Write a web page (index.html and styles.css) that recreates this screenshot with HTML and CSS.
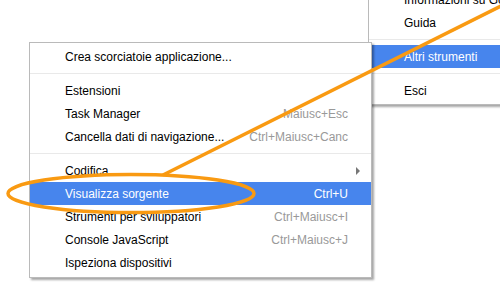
FILE: index.html
```html
<!DOCTYPE html>
<html lang="it">
<head>
    <meta charset="UTF-8">
    <meta name="viewport" content="width=device-width, initial-scale=1.0">
    <title>Altri strumenti</title>
    <link rel="stylesheet" href="styles.css">
</head>
<body>

<div class="desktop">
    <!-- menu principale (dietro) -->
    <div class="menu menu-back">
        <div class="item">Informazioni su Google Chrome</div>
        <div class="item">Guida</div>
        <div class="sep"></div>
        <div class="item active">Altri strumenti</div>
        <div class="sep"></div>
        <div class="item">Esci</div>
    </div>

    <!-- sottomenu Altri strumenti -->
    <div class="menu menu-sub">
        <div class="item">Crea scorciatoie applicazione...</div>
        <div class="sep"></div>
        <div class="item">Estensioni</div>
        <div class="item">Task Manager <span class="key">Maiusc+Esc</span></div>
        <div class="item">Cancella dati di navigazione... <span class="key">Ctrl+Maiusc+Canc</span></div>
        <div class="sep"></div>
        <div class="item">Codifica <span class="arrow"></span></div>
        <div class="item active">Visualizza sorgente <span class="key">Ctrl+U</span></div>
        <div class="item">Strumenti per sviluppatori <span class="key">Ctrl+Maiusc+I</span></div>
        <div class="item">Console JavaScript <span class="key">Ctrl+Maiusc+J</span></div>
        <div class="item">Ispeziona dispositivi</div>
    </div>

    <!-- evidenziazione -->
    <svg class="mark" width="500" height="300" viewBox="0 0 500 300">
        <line x1="163" y1="175" x2="520" y2="-3.5" stroke="#f99a12" stroke-width="3.5"/>
        <ellipse cx="131" cy="193.5" rx="123" ry="19" fill="none" stroke="#f99a12" stroke-width="3.5"/>
    </svg>
</div>

</body>
</html>
```

FILE: styles.css
```css
body {
    margin: 0;
    background: #fff;
    font-family: "Liberation Sans", Arial, sans-serif;
    font-size: 12px;
    color: #000;
}
.desktop {
    position: relative;
    width: 500px;
    height: 300px;
    overflow: hidden;
}
.menu {
    position: absolute;
    background: #fff;
    border: 1px solid #bababa;
    box-shadow: 2px 2px 2px rgba(0, 0, 0, 0.35);
    padding: 2px 0 3px;
}
.menu-back {
    left: 368px;
    top: -15px;
    width: 200px;
    padding-bottom: 2px;
}
.menu-sub {
    left: 29px;
    top: 42px;
    width: 341px;
}
.item {
    display: flex;
    align-items: center;
    justify-content: space-between;
    height: 23px;
    padding: 0 23px 0 35px;
    white-space: nowrap;
}
.item.active {
    background: #4785ed;
    color: #fff;
}
.key {
    color: #999;
}
.active .key {
    color: #fff;
}
.arrow {
    width: 0;
    height: 0;
    margin-right: -12px;
    border-top: 4px solid transparent;
    border-bottom: 4px solid transparent;
    border-left: 4px solid #777;
}
.sep {
    height: 1px;
    margin: 5px 0;
    background: #e9e9e9;
}
.mark {
    position: absolute;
    left: 0;
    top: 0;
    pointer-events: none;
}
```
